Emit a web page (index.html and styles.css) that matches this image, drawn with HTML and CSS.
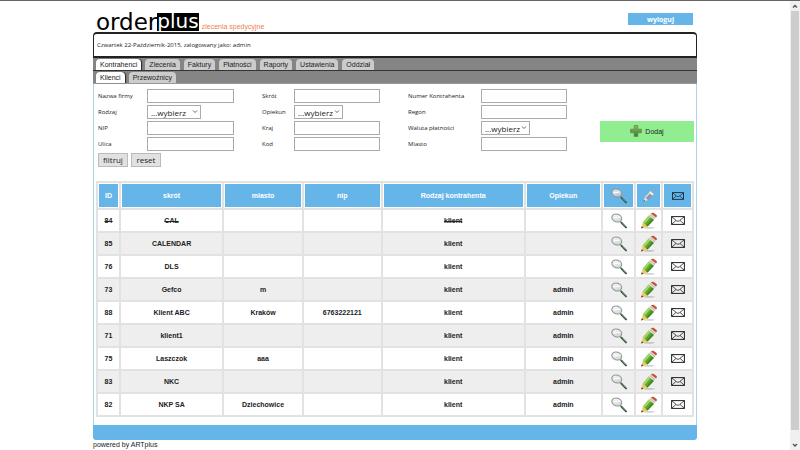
FILE: index.html
```html
<!DOCTYPE html>
<html lang="pl">
<head>
    <meta charset="UTF-8">
    <meta name="viewport" content="width=device-width, initial-scale=1.0">
    <title>orderplus - Kontrahenci</title>
    <link rel="stylesheet" href="styles.css">
</head>
<body>

<!-- ikony -->
<svg class="icons" width="0" height="0" aria-hidden="true">
    <defs>
        <linearGradient id="glass" x1="0" y1="0" x2="1" y2="1">
            <stop offset="0" stop-color="#ffffff" stop-opacity="0.9"/>
            <stop offset="1" stop-color="#b9c4c8" stop-opacity="0.7"/>
        </linearGradient>
        <linearGradient id="plusFill" x1="0" y1="0" x2="0" y2="1">
            <stop offset="0" stop-color="#8cb870"/>
            <stop offset="1" stop-color="#3f7a2c"/>
        </linearGradient>
        <symbol id="lupa" viewBox="0 0 16 16">
            <path d="M9 8.2L11 10.2" stroke="#8a8a8a" stroke-width="1.4"/>
            <path d="M10.6 9.8L15 14.4" stroke="#355c34" stroke-width="1.9" stroke-linecap="round"/>
            <path d="M11 9.8L14.6 13.6" stroke="#7fae6f" stroke-width="0.6"/>
            <ellipse cx="5.8" cy="5" rx="5" ry="3.9" fill="url(#glass)" stroke="#959595" stroke-width="1.1" transform="rotate(18 5.8 5)"/>
            <path d="M2.6 5.4C4 3.4 6.4 5.4 8.6 3.8" stroke="#ffffff" stroke-width="1.1" fill="none"/>
        </symbol>
        <symbol id="olowek" viewBox="0 0 18 18">
            <ellipse cx="9" cy="15.8" rx="6" ry="0.9" fill="#000000" opacity="0.18"/>
            <path d="M1.2 16.4L2.8 10.6L7.6 14.6Z" fill="#f3c75c"/>
            <path d="M1.2 16.4L1.8 14.2L3.4 15.7Z" fill="#333333"/>
            <path d="M2.8 10.6L8.8 3.6L14 7.8L7.6 14.6Z" fill="#5faa2c"/>
            <path d="M2.8 10.6L8.8 3.6L10.6 5L4.4 12Z" fill="#a5d766"/>
            <path d="M6.2 13.4L12.2 6.4L14 7.8L7.6 14.6Z" fill="#47871f"/>
            <path d="M8.8 3.6L10.9 1.4L16 5.6L14 7.8Z" fill="#dedede"/>
            <path d="M9.9 2.5L15 6.7" stroke="#9a9a9a" stroke-width="0.6"/>
            <path d="M10.9 1.4Q12 0.4 13.4 0.8L16.6 3Q17.6 4 16 5.6Z" fill="#c9502f"/>
        </symbol>
        <symbol id="olowek-szary" viewBox="0 0 12 12">
            <path d="M0.6 11.4L1.8 7L5.2 10Z" fill="#e3e3e3"/>
            <path d="M0.6 11.4L1 9.8L2.2 10.9Z" fill="#444444"/>
            <path d="M1.8 7L6 2.4L9.4 5.4L5.2 10Z" fill="#8e979c"/>
            <path d="M1.8 7L6 2.4L7.2 3.4L3 8Z" fill="#d5dade"/>
            <path d="M6 2.4L7.4 0.9L10.8 3.9L9.4 5.4Z" fill="#f4f4f4"/>
            <path d="M7.4 0.9Q8.6 0 9.6 0.6L11.3 2Q11.8 2.8 10.8 3.9Z" fill="#a9a3a6"/>
        </symbol>
        <symbol id="koperta" viewBox="0 0 14 9">
            <rect x="0.6" y="0.6" width="12.8" height="7.8" fill="none" stroke="currentColor" stroke-width="1"/>
            <path d="M1 1L5.6 4.8Q7 5.9 8.4 4.8L13 1M1 8L5 4.4M13 8L9 4.4" fill="none" stroke="currentColor" stroke-width="0.8"/>
        </symbol>
        <symbol id="plus" viewBox="0 0 12 12">
            <path d="M4.2 0.5H7.8V4.2H11.5V7.8H7.8V11.5H4.2V7.8H0.5V4.2H4.2Z" fill="url(#plusFill)" stroke="#5d8a48" stroke-width="0.7"/>
        </symbol>
    </defs>
</svg>

<div class="window">
<div class="page">
    <header class="top">
        <h1 class="logo"><span class="order">order</span><span class="plus">plus</span><small>zlecenia spedycyjne</small></h1>
        <button class="logout" type="button">wyloguj</button>
    </header>

    <div class="info">Czwartek 22-Październik-2015, zalogowany jako: admin</div>

    <nav class="tabs">
        <a class="active" href="#">Kontrahenci</a>
        <a href="#">Zlecenia</a>
        <a href="#">Faktury</a>
        <a href="#">Płatności</a>
        <a href="#">Raporty</a>
        <a href="#">Ustawienia</a>
        <a href="#">Oddział</a>
    </nav>
    <nav class="tabs sub">
        <a class="active" href="#">Klienci</a>
        <a href="#">Przewoźnicy</a>
    </nav>

    <main class="content">
        <form class="filters">
            <div class="fields">
                <div class="group first">
                    <label for="nazwa">Nazwa firmy</label><input type="text" id="nazwa">
                    <label for="rodzaj">Rodzaj</label><select id="rodzaj" class="wide"><option>...wybierz</option></select>
                    <label for="nip">NIP</label><input type="text" id="nip">
                    <label for="ulica">Ulica</label><input type="text" id="ulica">
                </div>
                <div class="group second">
                    <label for="skrot">Skrót</label><input type="text" id="skrot">
                    <label for="opiekun">Opiekun</label><select id="opiekun"><option>...wybierz</option></select>
                    <label for="kraj">Kraj</label><input type="text" id="kraj">
                    <label for="kod">Kod</label><input type="text" id="kod">
                </div>
                <div class="group third">
                    <label for="numer">Numer Kontrahenta</label><input type="text" id="numer">
                    <label for="regon">Regon</label><input type="text" id="regon">
                    <label for="waluta">Waluta płatności</label><select id="waluta"><option>...wybierz</option></select>
                    <label for="miasto">Miasto</label><input type="text" id="miasto">
                </div>
                <button class="add" type="button"><svg width="12" height="12"><use href="#plus"/></svg><span>Dodaj</span></button>
            </div>
            <div class="buttons">
                <button type="button">filtruj</button>
                <button type="reset">reset</button>
            </div>
        </form>

        <table class="list">
            <colgroup>
                <col class="c-id"><col class="c-skrot"><col class="c-miasto"><col class="c-nip"><col class="c-rodzaj"><col><col class="c-view"><col class="c-edit"><col class="c-mail">
            </colgroup>
            <thead>
                <tr>
                    <th>ID</th>
                    <th>skrót</th>
                    <th>miasto</th>
                    <th>nip</th>
                    <th>Rodzaj kontrahenta</th>
                    <th>Opiekun</th>
                    <th><svg width="16" height="16"><use href="#lupa"/></svg></th>
                    <th><svg width="12" height="12"><use href="#olowek-szary"/></svg></th>
                    <th class="mail"><svg width="12" height="8"><use href="#koperta"/></svg></th>
                </tr>
            </thead>
            <tbody id="rows"></tbody>
        </table>
    </main>

    <div class="bottom"></div>
    <footer>powered by ARTplus</footer>
</div>

<div class="scrollbar">
    <svg width="10" height="10" viewBox="0 0 10 10"><path d="M3 6.5L5 4.5L7 6.5" fill="none" stroke="#505050" stroke-width="1.3"/></svg>
    <div class="thumb"></div>
    <svg width="10" height="10" viewBox="0 0 10 10"><path d="M3 4L5 6L7 4" fill="none" stroke="#505050" stroke-width="1.3"/></svg>
</div>
</div>

<script src="script.js"></script>
</body>
</html>
```
FILE: script.js
```js
const clients = [
    { id: 84, name: 'CAL', city: '', nip: '', owner: '', removed: true },
    { id: 85, name: 'CALENDAR', city: '', nip: '', owner: '' },
    { id: 76, name: 'DLS', city: '', nip: '', owner: '' },
    { id: 73, name: 'Gefco', city: 'm', nip: '', owner: 'admin' },
    { id: 88, name: 'Klient ABC', city: 'Kraków', nip: '6763222121', owner: 'admin' },
    { id: 71, name: 'klient1', city: '', nip: '', owner: 'admin' },
    { id: 75, name: 'Laszczok', city: 'aaa', nip: '', owner: 'admin' },
    { id: 83, name: 'NKC', city: '', nip: '', owner: 'admin' },
    { id: 82, name: 'NKP SA', city: 'Dziechowice', nip: '', owner: 'admin' }
];

const rows = document.getElementById('rows');

function icon(name, width, height, label) {
    return `<a href="#" aria-label="${label}"><svg width="${width}" height="${height}"><use href="#${name}"/></svg></a>`;
}

clients.forEach(client => {
    const row = rows.insertRow();
    if (client.removed) {
        row.className = 'removed';
    }
    [client.id, client.name, client.city, client.nip, 'klient', client.owner].forEach(text => {
        row.insertCell().textContent = text;
    });
    row.insertCell().innerHTML = icon('lupa', 16, 16, 'szczegóły');
    row.insertCell().innerHTML = icon('olowek', 18, 18, 'edytuj');
    row.insertCell().innerHTML = icon('koperta', 14, 9, 'wyślij');
});
```
FILE: styles.css
```css
* {
    box-sizing: border-box;
}

body {
    margin: 0;
    background-color: #fff;
    color: #222;
    font-family: "Liberation Sans", Arial, sans-serif;
    font-size: 7px;
}
.icons {
    position: absolute;
}
svg {
    display: block;
}
a {
    color: inherit;
    text-decoration: none;
}
button {
    font-family: inherit;
    cursor: pointer;
}

.window {
    display: flex;
    min-height: 100vh;
    border-top: 1px solid #666;
}
.page {
    flex: 1;
    padding: 0 93px;
}

/* Logo + wyloguj */
.top {
    display: flex;
    justify-content: space-between;
    align-items: flex-start;
    height: 31px;
    padding: 12px 4px 0 3px;
}
.logo {
    display: flex;
    align-items: flex-end;
    margin: 0;
    color: #000;
    font-family: "DejaVu Sans", sans-serif;
    font-weight: normal;
    line-height: 17px;
}
.logo .order {
    font-size: 23px;
}
.logo .plus {
    background-color: #000;
    color: #fff;
    font-size: 20px;
    height: 18px;
}
.logo small {
    margin-left: 3px;
    color: #f08050;
    font-family: "Liberation Sans", Arial, sans-serif;
    font-size: 7px;
    line-height: 8px;
}
.logout {
    width: 65px;
    height: 12px;
    padding: 0;
    border: none;
    background-color: #66b5e8;
    color: #fff;
    font-family: "Open Sans", sans-serif;
    font-size: 7px;
    font-weight: bold;
}

.info {
    height: 26px;
    padding: 0 3px;
    border: 1px solid #222;
    border-width: 2px 1px;
    border-radius: 4px 4px 0 0;
    font-family: "Open Sans", sans-serif;
    font-size: 6px;
    line-height: 22px;
}

/* Zakładki */
.tabs {
    display: flex;
    align-items: flex-end;
    gap: 4px;
    height: 13px;
    padding: 0 3px;
    border-bottom: 1px solid #333;
    background-color: #858585;
    font-size: 7px;
}
.tabs a {
    height: 11px;
    padding: 0 4px;
    border-radius: 4px 4px 0 0;
    background-color: #ccc;
    line-height: 12px;
}
.tabs a.active {
    background-color: #fff;
    box-shadow: 1px 0 1px #222;
}
.tabs.sub {
    border-bottom-color: #999;
}

.content {
    padding: 5px 2px 8px;
    border: 1px solid #a9d4ef;
    border-width: 0 1px;
}

/* Filtry */
.filters {
    padding-left: 2px;
}
.fields {
    display: flex;
    align-items: center;
}
.group {
    display: grid;
    gap: 2px 0;
    align-items: center;
    margin-right: 28px;
}
.group.first {
    flex: 136;
    grid-template-columns: 49px 1fr;
}
.group.second {
    flex: 118;
    grid-template-columns: 32px 1fr;
}
.group.third {
    flex: 159;
    grid-template-columns: 73px 1fr;
    margin-right: 33px;
}
.group label {
    font-family: "Open Sans", sans-serif;
    font-size: 6px;
}
.group input {
    width: 100%;
    height: 14px;
    padding: 0 3px;
    border: 1px solid #aaa;
}
.group select {
    appearance: none;
    width: 49px;
    height: 14px;
    padding: 0 3px;
    border: 1px solid #aaa;
    border-radius: 0;
    background: #fff url("data:image/svg+xml,%3Csvg xmlns='http://www.w3.org/2000/svg' width='6' height='4'%3E%3Cpath d='M1 .5L3 2.5L5 .5' fill='none' stroke='%23666'/%3E%3C/svg%3E") no-repeat right 2px center;
    color: #222;
    font-family: "Open Sans", sans-serif;
    font-size: 8px;
}
.group select.wide {
    width: 54px;
}
.add {
    display: flex;
    justify-content: center;
    align-items: center;
    gap: 3px;
    width: 94px;
    height: 21px;
    margin-top: 22px;
    padding: 0;
    border: none;
    background-color: #90ee90;
    color: #222;
    font-size: 7px;
}
.buttons {
    display: flex;
    gap: 3px;
    margin-top: 2px;
}
.buttons button {
    width: 30px;
    height: 14px;
    padding: 0;
    border: 1px solid #bbb;
    background-color: #e1e1e1;
    color: #222;
    font-family: "Open Sans", sans-serif;
    font-size: 8px;
    line-height: 12px;
}

/* Lista kontrahentów */
.list {
    width: 100%;
    margin-top: 14px;
    border-collapse: collapse;
    table-layout: fixed;
    font-weight: bold;
    text-align: center;
}
.c-id { width: 23px; }
.c-skrot { width: 17.3%; }
.c-miasto { width: 13.4%; }
.c-nip { width: 13.2%; }
.c-rodzaj { width: 24%; }
.c-view { width: 33px; }
.c-edit { width: 27px; }
.c-mail { width: 31px; }
.list th, .list td {
    height: 23px;
    padding: 1px;
    border: 2px solid #e2e2e2;
}
.list th {
    height: 27px;
    background-color: #66b5e8;
    box-shadow: inset 0 0 0 1px #fff;
    color: #fff;
}
.list th.mail {
    color: #123;
}
.list tbody tr:nth-child(even) {
    background-color: #eee;
}
.list svg {
    margin: 0 auto;
}
.removed td {
    text-decoration: line-through;
}

.bottom {
    height: 15px;
    border-radius: 0 0 3px 3px;
    background-color: #66b5e8;
}
footer {
    font-size: 7px;
    line-height: 10px;
}

/* Pasek przewijania */
.scrollbar {
    display: flex;
    flex-direction: column;
    width: 10px;
    background-color: #f0f0f0;
}
.scrollbar .thumb {
    flex: 1;
    margin: 0 1px 10px;
    background-color: #cdcdcd;
}
```
